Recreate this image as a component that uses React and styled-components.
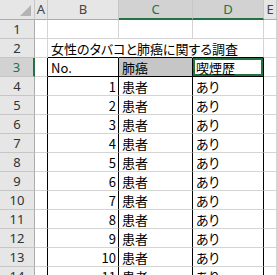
import React from "react";
import styled, { createGlobalStyle } from "styled-components";

const GlobalStyle = createGlobalStyle`
  html, body {
    margin: 0;
    background: #ffffff;
  }
  body {
    font-family: "Noto Sans CJK JP", "Noto Sans", sans-serif;
  }
`;

const GRID = "#d4d4d4";
const HEAD_LINE = "#c6c6c6";
const GREEN = "#217346";

const Sheet = styled.div`
  display: grid;
  grid-template-columns: 35px 13px 71px 74px 71px 1fr;
  grid-template-rows: 20px;
  grid-auto-rows: 19px;
  width: 277px;
  height: 275px;
  overflow: hidden;
`;

const Corner = styled.div`
  background: #e6e6e6;
  border-right: 1px solid ${HEAD_LINE};
  border-bottom: 1px solid #ababab;
  display: flex;
  justify-content: flex-end;
  align-items: flex-end;
  padding: 0 3px 3px 0;
`;

const ColHeader = styled.div`
  background: ${(p) => (p.$selected ? "#d2d2d2" : "#e6e6e6")};
  color: ${(p) => (p.$selected ? GREEN : "#444444")};
  border-right: 1px solid ${HEAD_LINE};
  border-bottom: ${(p) => (p.$selected ? `2px solid ${GREEN}` : "1px solid #ababab")};
  font-family: "Noto Sans", sans-serif;
  font-size: 13px;
  line-height: 18px;
  text-align: center;
  overflow: hidden;
`;

const RowHeader = styled.div`
  background: ${(p) => (p.$selected ? "#d2d2d2" : "#e6e6e6")};
  color: ${(p) => (p.$selected ? GREEN : "#333333")};
  border-right: ${(p) => (p.$selected ? `2px solid ${GREEN}` : "1px solid #ababab")};
  border-bottom: 1px solid ${HEAD_LINE};
  font-family: "Noto Sans", sans-serif;
  font-size: 13px;
  line-height: 18px;
  text-align: center;
`;

const Cell = styled.div`
  background: ${(p) => (p.$shade ? "#c6c6c6" : "#ffffff")};
  border-right: 1px solid ${(p) => p.$right};
  border-bottom: 1px solid ${(p) => p.$bottom};
  box-shadow: ${(p) => (p.$active ? `inset 0 0 0 2px ${GREEN}` : "none")};
  display: flex;
  align-items: flex-end;
  justify-content: ${(p) => (p.$num ? "flex-end" : "flex-start")};
  padding: 0 2px 0 3px;
  font-size: 13px;
  line-height: 17px;
  color: #000000;
  white-space: nowrap;
  overflow: visible;
  font-feature-settings: "palt";
  min-width: 0;
`;

const Title = styled.span`
  position: relative;
  z-index: 1;
`;

const COLS = ["A", "B", "C", "D", "E"];
const ROWS = Array.from({ length: 14 }, (_, i) => i + 1);

function borders(row, col) {
  const inTable = ["B", "C", "D"].includes(col);
  let right = GRID;
  if (row >= 3 && (col === "A" || inTable)) right = "#000000";
  if (row === 2 && (col === "B" || col === "C")) right = "#ffffff";
  let bottom = GRID;
  if (inTable && (row === 2 || row === 3)) bottom = "#000000";
  return { right, bottom };
}

function content(row, col) {
  if (row === 2 && col === "B") return <Title>女性のタバコと肺癌に関する調査</Title>;
  if (row === 3) {
    if (col === "B") return "No.";
    if (col === "C") return "肺癌";
    if (col === "D") return "喫煙歴";
  }
  if (row >= 4) {
    if (col === "B") return row - 3;
    if (col === "C") return "患者";
    if (col === "D") return "あり";
  }
  return null;
}

export default function App() {
  return (
    <>
      <GlobalStyle />
      <Sheet>
        <Corner>
          <svg width="11" height="11" viewBox="0 0 11 11">
            <polygon points="11,0 11,11 0,11" fill="#b4b4b4" />
          </svg>
        </Corner>
        {COLS.map((c) => (
          <ColHeader key={c} $selected={c === "C" || c === "D"}>
            {c}
          </ColHeader>
        ))}
        {ROWS.map((r) => (
          <React.Fragment key={r}>
            <RowHeader $selected={r === 3}>{r}</RowHeader>
            {COLS.map((c) => {
              const b = borders(r, c);
              return (
                <Cell
                  key={c}
                  $right={b.right}
                  $bottom={b.bottom}
                  $num={r >= 4 && c === "B"}
                  $shade={r === 3 && c === "C"}
                  $active={r === 3 && c === "D"}
                >
                  {content(r, c)}
                </Cell>
              );
            })}
          </React.Fragment>
        ))}
      </Sheet>
    </>
  );
}
